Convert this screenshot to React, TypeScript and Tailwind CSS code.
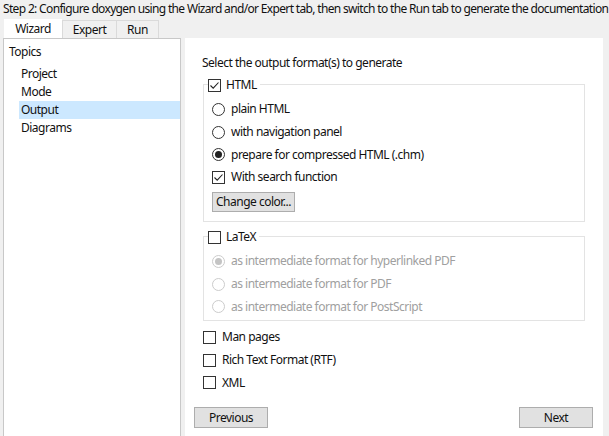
import React from 'react'

const font = { fontFamily: '"Noto Sans", "Open Sans", sans-serif' }

function Check({ checked, disabled }: { checked?: boolean; disabled?: boolean }) {
  return (
    <span
      className={`w-[13px] h-[13px] border bg-white flex items-center justify-center shrink-0 ${
        disabled ? 'border-[#bcbcbc]' : 'border-[#333]'
      }`}
    >
      {checked && (
        <svg width="11" height="11" viewBox="0 0 11 11">
          <path d="M1.5 5.5 L4.2 8.2 L9.5 2.5" fill="none" stroke="#222" strokeWidth="1.1" />
        </svg>
      )}
    </span>
  )
}

function Radio({ checked, disabled }: { checked?: boolean; disabled?: boolean }) {
  return (
    <span
      className={`w-[13px] h-[13px] rounded-full border bg-white flex items-center justify-center shrink-0 ${
        disabled ? 'border-[#cccccc]' : 'border-[#333]'
      }`}
    >
      {checked && (
        <span className={`w-[7px] h-[7px] rounded-full ${disabled ? 'bg-[#c4c4c4]' : 'bg-[#222]'}`} />
      )}
    </span>
  )
}

function Row({ children, label, disabled }: { children: React.ReactNode; label: string; disabled?: boolean }) {
  return (
    <div className="flex items-center gap-[6px] h-[22.7px]">
      {children}
      <span className={disabled ? 'text-[#a0a0a0]' : 'text-[#111]'}>{label}</span>
    </div>
  )
}

export default function App() {
  const topics = ['Project', 'Mode', 'Output', 'Diagrams']
  return (
    <div
      className="w-[609px] h-[436px] bg-[#f0f0f0] text-[12px] tracking-[-0.5px] text-[#111] overflow-hidden flex flex-col"
      style={font}
    >
      <div className="h-[19px] pl-[3px] pt-[1px] leading-[16px] whitespace-nowrap tracking-[-0.66px]">
        Step 2: Configure doxygen using the Wizard and/or Expert tab, then switch to the Run tab to generate the documentation
      </div>
      <div className="flex pl-[4px] h-[19px]">
        <div className="w-[58px] bg-white flex items-center justify-center">Wizard</div>
        <div className="w-[55px] border border-b-0 border-[#dadada] bg-[#f0f0f0] flex items-center justify-center mt-[1px]">Expert</div>
        <div className="w-[42px] border border-b-0 border-l-0 border-[#dadada] bg-[#f0f0f0] flex items-center justify-center mt-[1px]">Run</div>
      </div>
      <div className="flex flex-1 pl-[3px] gap-[4px] pr-[6px]">
        <div className="w-[178px] bg-white border border-[#c8c8c8] border-b-0 pt-[4px]">
          <div className="pl-[5px] h-[18px] leading-[18px]">Topics</div>
          <div className="mt-[4px]">
            {topics.map(t => (
              <div
                key={t}
                className={`ml-[15px] pl-[2px] h-[18px] leading-[18px] ${t === 'Output' ? 'bg-[#cce8ff]' : ''}`}
              >
                {t}
              </div>
            ))}
          </div>
        </div>
        <div className="flex-1 bg-white flex flex-col pt-[17px] pb-[8px]">
          <div className="pl-[17px] pr-[18px]">
            <div className="h-[16px] leading-[16px]">Select the output format(s) to generate</div>
            <div className="relative mt-[13px] border border-[#e3e3e3] ml-[1px] h-[138px] px-[8px] pt-[13px]">
              <div className="absolute -top-[7px] left-[4px] bg-white pr-[3px] flex items-center gap-[5px] h-[14px]">
                <Check checked />
                <span>HTML</span>
              </div>
              <Row label="plain HTML"><Radio /></Row>
              <Row label="with navigation panel"><Radio /></Row>
              <Row label="prepare for compressed HTML (.chm)"><Radio checked /></Row>
              <Row label="With search function"><Check checked /></Row>
              <button className="mt-[3px] h-[20px] px-[3px] bg-[#e1e1e1] border border-[#adadad] leading-[16px]">
                Change color...
              </button>
            </div>
            <div className="relative mt-[14px] border border-[#e3e3e3] ml-[1px] h-[85px] px-[8px] pt-[13px]">
              <div className="absolute -top-[7px] left-[4px] bg-white pr-[3px] flex items-center gap-[5px] h-[14px]">
                <Check />
                <span>LaTeX</span>
              </div>
              <Row label="as intermediate format for hyperlinked PDF" disabled><Radio checked disabled /></Row>
              <Row label="as intermediate format for PDF" disabled><Radio disabled /></Row>
              <Row label="as intermediate format for PostScript" disabled><Radio disabled /></Row>
            </div>
            <div className="mt-[5px] ml-[1px]">
              <Row label="Man pages"><Check /></Row>
              <Row label="Rich Text Format (RTF)"><Check /></Row>
              <Row label="XML"><Check /></Row>
            </div>
          </div>
          <div className="mt-auto flex justify-between pl-[9px] pr-[10px]">
            <button className="w-[74px] h-[21px] bg-[#e1e1e1] border border-[#adadad]">Previous</button>
            <button className="w-[74px] h-[21px] bg-[#e1e1e1] border border-[#adadad]">Next</button>
          </div>
        </div>
      </div>
    </div>
  )
}
